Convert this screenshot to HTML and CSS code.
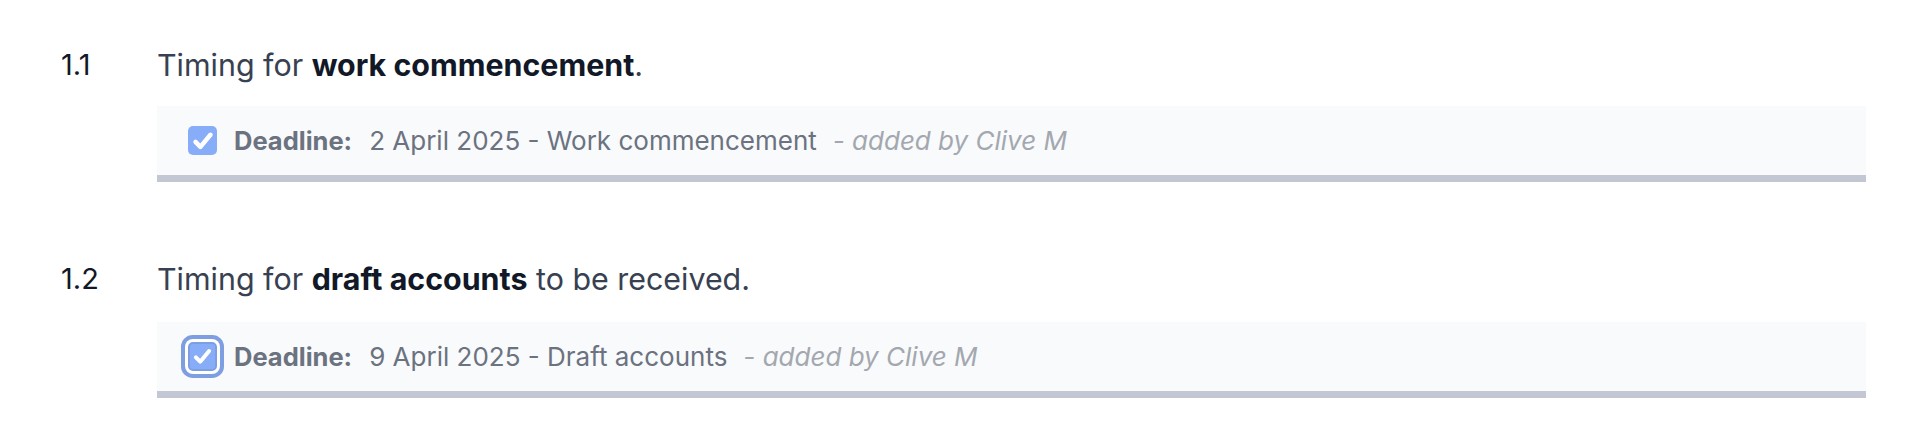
FILE: index.html
```html
<!DOCTYPE html>
<html lang="en">
<head>
	<meta charset="UTF-8">
	<title>Timings</title>
	<link rel="stylesheet" href="styles.css">
</head>
<body>
	<div class="clauses">
		<div class="clause">
			<div class="num">1.1</div>
			<div class="body">
				<p class="text">Timing for <b>work commencement</b>.</p>
				<div class="deadline">
					<span class="check"><svg viewBox="0 0 16 16"><path d="M3.4 8.6l3 3 6.2-7.4" /></svg></span>
					<span class="label">Deadline:</span>
					<span class="date">2 April 2025 - Work commencement</span>
					<span class="by">- added by Clive M</span>
				</div>
			</div>
		</div>
		<div class="clause">
			<div class="num">1.2</div>
			<div class="body">
				<p class="text">Timing for <b>draft accounts</b> to be received.</p>
				<div class="deadline deadline-focus">
					<span class="check focus"><svg viewBox="0 0 16 16"><path d="M3.4 8.6l3 3 6.2-7.4" /></svg></span>
					<span class="label">Deadline:</span>
					<span class="date">9 April 2025 - Draft accounts</span>
					<span class="by">- added by Clive M</span>
				</div>
			</div>
		</div>
	</div>
</body>
</html>
```
FILE: styles.css
```css
*{
	margin: 0;
	padding: 0;
	box-sizing: border-box;
}
body{
	background: #fff;
	font-family: Inter, "Noto Sans", sans-serif;
	color: #374151;
}
.clauses{
	padding: 43px 54px 0 61px;
}
.clause{
	display: flex;
	margin-bottom: 75px;
}
.clause:last-child{
	margin-bottom: 0;
}
.num{
	width: 96px;
	font-size: 29px;
	line-height: 44px;
	color: #111827;
}
.body{
	flex: 1;
}
.text{
	font-size: 30.4px;
	line-height: 44px;
	color: #374151;
}
.text b{
	font-weight: 700;
	color: #111827;
}
.deadline{
	margin-top: 19px;
	height: 76px;
	background: #f9fafb;
	border-bottom: 7px solid #c3c7d4;
	display: flex;
	align-items: center;
	padding-left: 31px;
	font-size: 26px;
}
.deadline-focus{
	margin-top: 21px;
}
.check{
	width: 29px;
	height: 29px;
	border-radius: 5px;
	background: #87acf8;
	display: flex;
	align-items: center;
	justify-content: center;
	margin-right: 17px;
}
.check svg{
	width: 26px;
	height: 26px;
	fill: none;
	stroke: #fff;
	stroke-width: 2.8;
	stroke-linecap: round;
	stroke-linejoin: round;
}
.check.focus{
	border: 2px solid #7d9fe2;
	box-shadow: 0 0 0 3px #fff, 0 0 0 7px #7d9fe2;
}
.check.focus svg{
	width: 23px;
	height: 23px;
}
.label{
	font-size: 25.5px;
	font-weight: 700;
	color: #6b7280;
	margin-right: 17px;
}
.date{
	color: #6b7280;
	margin-right: 16px;
}
.by{
	font-style: italic;
	color: #a3a8b0;
}
```
